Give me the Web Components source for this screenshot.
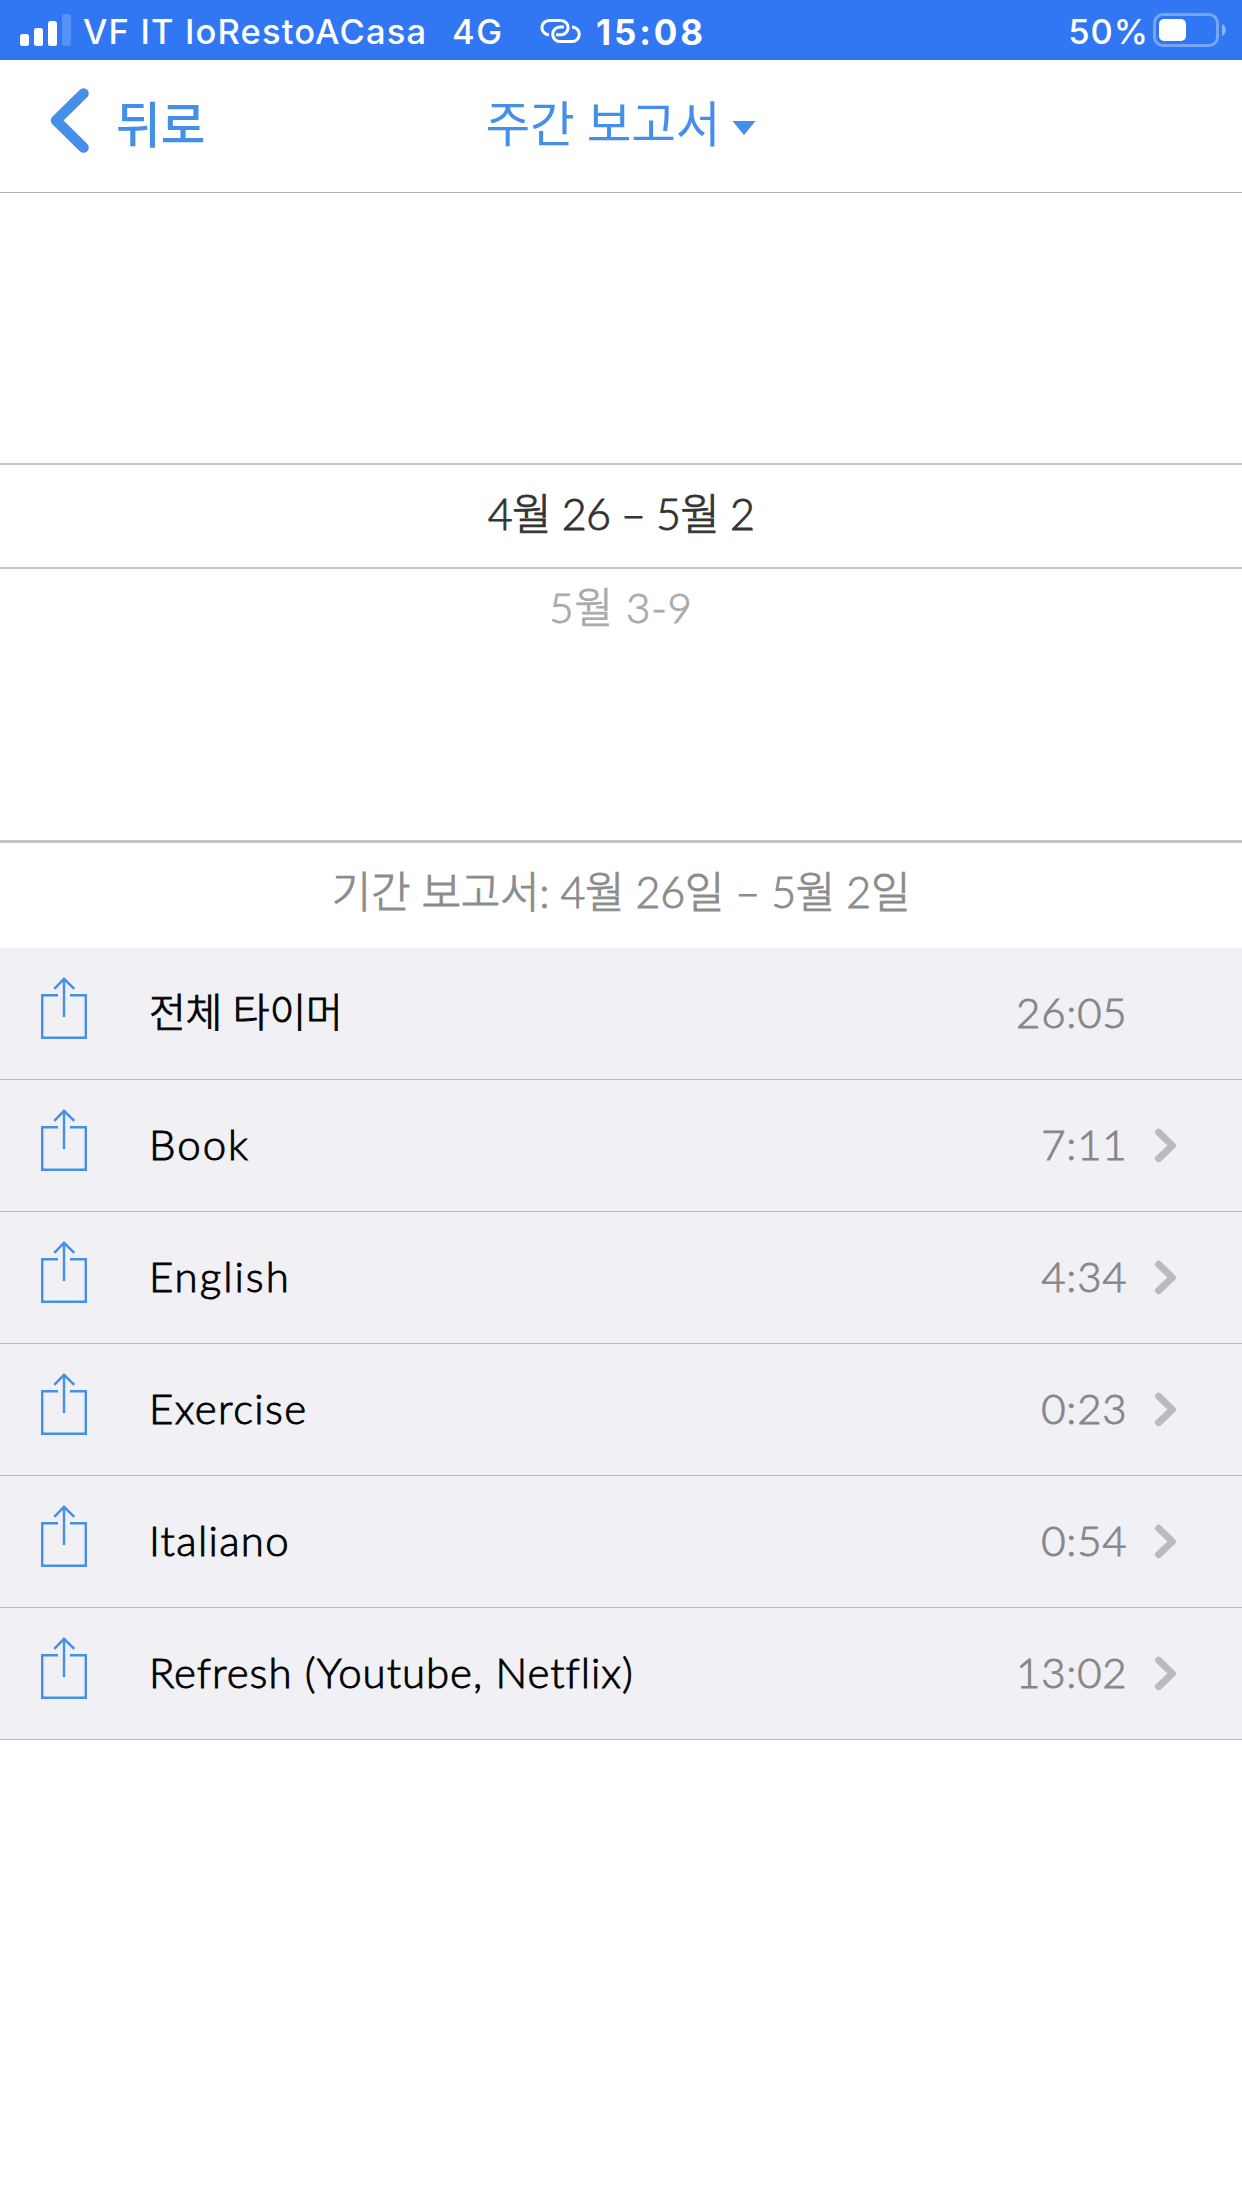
<!DOCTYPE html>
<html lang="ko">
<head>
<meta charset="utf-8">
<title>주간 보고서</title>
<style>
	body {
		margin: 0;
		background: #fff;
		font-family: Lato, 'Noto Sans CJK KR', sans-serif;
		font-weight: 400;
	}
</style>
</head>
<body>
<report-app></report-app>

<script>
function define(name, html) {
	const template = document.createElement('template');
	template.innerHTML = html;

	customElements.define(name, class extends HTMLElement {
		constructor() {
			super();
			this.attachShadow({mode: 'open'}).appendChild(template.content.cloneNode(true));
		}
	});
}

define('status-bar', `
	<style>
		:host {
			display: flex;
			align-items: center;
			box-sizing: border-box;
			height: 60px;
			padding: 0 16px 0 20px;
			background: #3176f3;
			color: #fff;
			font: 500 34.5px/60px Inter, sans-serif;
			white-space: nowrap;
		}
		span { padding-top: 3px; }
		svg { display: block; flex: none; }
		.signal { margin-right: 12px; }
		.carrier { width: 369px; letter-spacing: 1.15px; }
		.network { width: 88px; letter-spacing: 1.5px; }
		.time { margin-left: 14px; font-size: 35px; font-weight: 700; letter-spacing: 2.9px; }
		.battery { margin-left: auto; margin-right: 4px; letter-spacing: 1px; }
	</style>
	<svg class="signal" width="51" height="60" fill="#fff">
		<rect x="0" y="34" width="9" height="12" rx="2.5"/>
		<rect x="14" y="28" width="9" height="18" rx="2.5"/>
		<rect x="28" y="21" width="9" height="25" rx="2.5"/>
		<rect x="42" y="14" width="9" height="32" rx="2.5" fill="#5591f6"/>
	</svg>
	<span class="carrier">VF IT IoRestoACasa</span>
	<span class="network">4G</span>
	<svg width="42" height="60" viewBox="540 0 42 60" fill="none" stroke="#fff" stroke-width="3">
		<path d="M549 34.7a7.1 7.1 0 0 1 0-14.2h12a7.1 7.1 0 0 1 0 14.2h-5"/>
		<path d="M572 27a7.3 7.3 0 0 1 0 14.6h-12a7.3 7.3 0 0 1 0-14.6h4"/>
	</svg>
	<span class="time">15:08</span>
	<span class="battery">50%</span>
	<svg width="73" height="60" viewBox="1153 0 73 60">
		<rect x="1154.5" y="14.5" width="63" height="31" rx="8.5" fill="none" stroke="#76a6f8" stroke-width="3"/>
		<rect x="1159" y="19" width="27" height="22" rx="5" fill="#fff"/>
		<path d="M1222 24c5 2 5 10 0 12z" fill="#8bb3f9"/>
	</svg>
`);

define('nav-bar', `
	<style>
		:host {
			display: grid;
			grid-template-columns: 1fr auto 1fr;
			box-sizing: border-box;
			height: 133px;
			border-bottom: 1px solid #b2b2b2;
			color: #448fe7;
			font-size: 48.6px;
			white-space: nowrap;
		}
		.back { display: flex; padding-left: 50px; line-height: 129px; font-weight: 500; }
		.back svg { margin-right: 26px; }
		.title { display: flex; line-height: 126px; letter-spacing: -0.2px; }
		svg { display: block; flex: none; }
	</style>
	<div class="back">
		<svg width="40" height="132" viewBox="50 60 40 132" fill="none" stroke="#448fe7" stroke-width="10.5" stroke-linecap="round" stroke-linejoin="round">
			<path d="M83.5 93.5L56 120.5L83.5 147.5"/>
		</svg>
		<span><slot name="back"></slot></span>
	</div>
	<div class="title">
		<span><slot></slot></span>
		<svg width="36" height="132" viewBox="720.5 60 36 132" fill="#448fe7"><path d="M733 121h23l-11.5 14z"/></svg>
	</div>
	<div></div>
`);

define('week-picker', `
	<style>
		:host {
			display: block;
			box-sizing: border-box;
			height: 650px;
			padding-top: 270px;
			border-bottom: 3px solid #c5c5c5;
			text-align: center;
			font-weight: 300;
			-webkit-text-stroke: 0.9px;
			white-space: nowrap;
		}
		.selected {
			border: solid #c8c8c8;
			border-width: 2px 0;
			padding-bottom: 4px;
			color: #333;
			font-size: 43px;
			letter-spacing: -0.75px;
			line-height: 98px;
		}
		.next { color: #aaa; font-size: 42px; letter-spacing: 0.8px; line-height: 76px; }
	</style>
	<div class="selected"><slot></slot></div>
	<div class="next"><slot name="next"></slot></div>
`);

define('period-header', `
	<style>
		:host {
			display: block;
			height: 105px;
			color: #8c8c8c;
			font-size: 43px;
			font-weight: 300;
			letter-spacing: -0.35px;
			line-height: 98px;
			text-align: center;
			-webkit-text-stroke: 0.9px;
			white-space: nowrap;
		}
	</style>
	<slot></slot>
`);

define('timer-row', `
	<style>
		:host {
			display: flex;
			box-sizing: border-box;
			height: 132px;
			border-bottom: 1px solid #bbbac0;
			padding: 0 66px 0 40px;
			background: #f1f0f5;
			color: #000;
			font-size: 42px;
			font-weight: 300;
			line-height: 131px;
			-webkit-text-stroke: 0.9px;
			white-space: nowrap;
		}
		svg { display: block; flex: none; }
		.share { margin-right: 61px; }
		.name { flex: 1; line-height: 129px; letter-spacing: var(--tracking, 0); }
		.time { color: #87868b; line-height: 129px; letter-spacing: 0.8px; }
		.chevron { margin-left: 26.5px; }
		:host([total]) .name { font-size: 40px; line-height: 128px; }
		:host([total]) .chevron { visibility: hidden; }
	</style>
	<svg class="share" width="48" height="131" viewBox="40 948 48 131" fill="none" stroke="#448fe7" stroke-width="2.4">
		<path d="M58 995.3H42.2V1037.8H85.8V995.3H70"/>
		<path d="M64 1017V978.5M54.3 988.8L64 978.8L74.3 988.8"/>
	</svg>
	<span class="name"><slot></slot></span>
	<span class="time"><slot name="time"></slot></span>
	<svg class="chevron" width="22" height="131" viewBox="1154 1080 22 131" fill="none" stroke="#bbbac0" stroke-width="7" stroke-linecap="round" stroke-linejoin="round">
		<path d="M1158.6 1132.3L1172.4 1145.5L1158.6 1158.6"/>
	</svg>
`);

define('report-app', `
	<style>
		:host { display: block; }
	</style>
	<status-bar></status-bar>
	<nav-bar><span slot="back">뒤로</span>주간 보고서</nav-bar>
	<week-picker>4월 26 – 5월 2<span slot="next">5월 3-9</span></week-picker>
	<period-header>기간 보고서: 4월 26일 – 5월 2일</period-header>
	<timer-row total style="--tracking: -0.2px">전체 타이머<span slot="time">26:05</span></timer-row>
	<timer-row style="--tracking: 2px">Book<span slot="time">7:11</span></timer-row>
	<timer-row style="--tracking: 2px">English<span slot="time">4:34</span></timer-row>
	<timer-row style="--tracking: 1.35px">Exercise<span slot="time">0:23</span></timer-row>
	<timer-row style="--tracking: 1.3px">Italiano<span slot="time">0:54</span></timer-row>
	<timer-row style="--tracking: 0.95px">Refresh (Youtube, Netflix)<span slot="time">13:02</span></timer-row>
`);
</script>
</body>
</html>
